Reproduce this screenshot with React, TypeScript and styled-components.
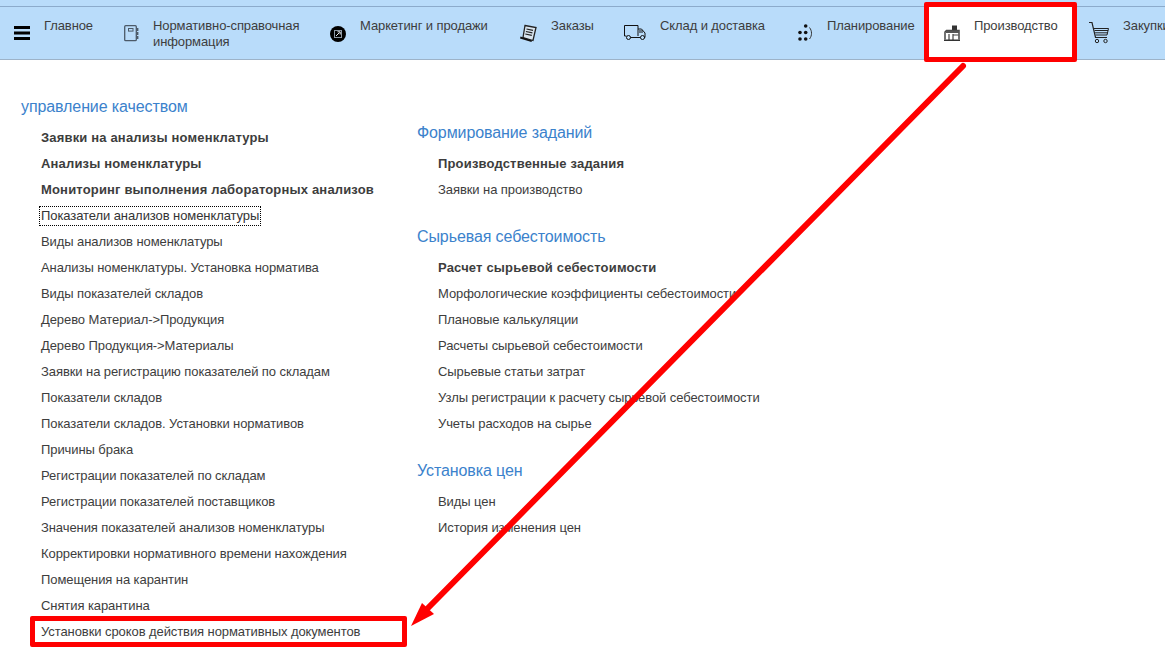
import React from 'react';
import styled, { createGlobalStyle } from 'styled-components';

const Global = createGlobalStyle`
  html, body { margin: 0; padding: 0; background: #fff; }
  body { font-family: "Liberation Sans", Arial, sans-serif; overflow: hidden; }
`;

const Page = styled.div`
  position: relative;
  width: 1165px;
  height: 654px;
  overflow: hidden;
  background: #fff;
`;

const TopStrip = styled.div`
  height: 6px;
  background: #b9dcfa;
  border-bottom: 1px solid #8cabcb;
`;

const NavBar = styled.nav`
  display: flex;
  height: 52px;
  background: #b9dcfa;
  border-bottom: 1px solid #9db3c8;
  overflow: hidden;
`;

const NavItem = styled.a<{ $active?: boolean; $first?: boolean; $width: number }>`
  display: flex;
  flex: none;
  box-sizing: border-box;
  width: ${p => p.$width}px;
  gap: 14px;
  padding: 11px 0 0 ${p => (p.$first ? 14 : 16)}px;
  background: ${p => (p.$active ? '#fff' : 'transparent')};
  font-size: 13px;
  line-height: 16px;
  letter-spacing: -0.1px;
  color: #3d3d3d;
`;

const NavIcon = styled.svg`
  flex: none;
  height: 24px;
  margin-top: 3px;
`;

const NavLabel = styled.span`
  white-space: pre;
`;

const Columns = styled.main`
  display: flex;
  padding-top: 34px;
`;

const Column = styled.div<{ $width: number; $top: number; $left: number }>`
  display: flex;
  flex-direction: column;
  gap: 21px;
  width: ${p => p.$width}px;
  padding: ${p => p.$top}px 0 0 ${p => p.$left}px;
`;

const Group = styled.section`
  display: flex;
  flex-direction: column;
`;

const Heading = styled.h2`
  margin: 0 0 5px;
  font-size: 16px;
  line-height: 26px;
  font-weight: 400;
  letter-spacing: -0.1px;
  color: #3b82cc;
`;

const Links = styled.ul<{ $indent: number }>`
  display: flex;
  flex-direction: column;
  margin: 0;
  padding: 0 0 0 ${p => p.$indent}px;
  list-style: none;
`;

const Link = styled.li<{ $strong?: boolean }>`
  height: 26px;
  font-size: 13px;
  line-height: 26px;
  letter-spacing: ${p => (p.$strong ? '0.17px' : '-0.08px')};
  font-weight: ${p => (p.$strong ? 700 : 400)};
  color: #3d3d3d;
  white-space: nowrap;
`;

const Focused = styled.span`
  display: inline-block;
  line-height: 16px;
  margin-left: -2px;
  padding: 2px;
  outline: 1px dotted #000;
  outline-offset: -1px;
  color: #333;
`;

const Frame = styled.div<{ $x: number; $y: number; $w: number; $h: number }>`
  position: absolute;
  left: ${p => p.$x}px;
  top: ${p => p.$y}px;
  width: ${p => p.$w}px;
  height: ${p => p.$h}px;
  box-sizing: border-box;
  border: 5px solid #ff0000;
  border-radius: 2px;
`;

const ArrowLayer = styled.svg`
  position: absolute;
  left: 0;
  top: 0;
`;

const Burger = () => (
  <NavIcon width="16" viewBox="0 0 16 24">
    <path d="M0 5h16v3H0zM0 10.5h16v3H0zM0 16h16v3H0z" fill="#000" />
  </NavIcon>
);

const Notebook = () => (
  <NavIcon width="15" viewBox="0 0 15 24" fill="none" stroke="#4c5a68" strokeWidth="1.3">
    <rect x=".7" y="4.7" width="11.6" height="15" rx="1" />
    <rect x="4.5" y="7.5" width="4.5" height="2.6" strokeWidth="1" />
    <path d="M13.5 7v3M13.5 11v3M13.5 15v3" strokeWidth="1.8" />
  </NavIcon>
);

const Marketing = () => (
  <NavIcon width="16" viewBox="0 0 16 24">
    <circle cx="8" cy="13" r="8" fill="#000" />
    <rect x="4.500" y="9.500" width="7" height="7" fill="none" stroke="#8d99a5" strokeWidth="1" />
    <path d="M6 15l3.500-3.500M7.500 10.800h2.700v2.700" fill="none" stroke="#e4e8ec" strokeWidth="1" />
  </NavIcon>
);

const Orders = () => (
  <NavIcon width="17" viewBox="0 0 17 24">
    <path d="M5 4.500 16 6.500l-3 13-10-3z" fill="#d8e4ee" stroke="#222" strokeWidth="1.300" />
    <path d="M6.500 8l6.500 1.400M5.900 10.500l6.500 1.400M5.300 13l6.500 1.400" stroke="#222" strokeWidth="1.100" />
    <path d="M.5 15.500 12 19.500l-.5 1.500L0 17.500z" fill="#111" />
  </NavIcon>
);

const Truck = () => (
  <NavIcon width="22" viewBox="0 0 22 24" fill="none" stroke="#111" strokeWidth="1">
    <path d="M2.500 15H.5V4.500H14V15" />
    <path d="M14 8h3.500l3.500 4v4.500h-1" />
    <path d="M16 9v3M18 9v3" />
    <circle cx="4.500" cy="16.500" r="2" />
    <circle cx="18.500" cy="16.500" r="2" />
    <path d="M6.500 16.500h10" />
  </NavIcon>
);

const Planning = () => (
  <NavIcon width="16" viewBox="0 0 16 24">
    <g fill="#111">
      <circle cx="8.700" cy="5" r="1.800" />
      <circle cx="3" cy="11.500" r="1.800" />
      <circle cx="8.700" cy="11.500" r="1.800" />
      <circle cx="3" cy="18" r="1.800" />
      <circle cx="8.700" cy="18" r="1.800" />
    </g>
    <path d="M12.500 6.500c2.700 3.500 2.700 8 0 11.500" fill="none" stroke="#333" strokeWidth="1" />
  </NavIcon>
);

const Factory = () => (
  <NavIcon width="16" viewBox="0 0 16 24">
    <path d="M8 4.500h5v5H8z" fill="#333" />
    <path d="M1 18.500V11l1.500-1.500H15v9" fill="none" stroke="#444" strokeWidth="1.500" />
    <path d="M2 9.500h13V12H2z" fill="#555" />
    <path d="M5 13v6M9 13v6M9 14h5.500" stroke="#444" strokeWidth="1.200" fill="none" />
    <path d="M0 18.500h16V20H0z" fill="#333" />
  </NavIcon>
);

const Cart = () => (
  <NavIcon width="20" viewBox="0 0 20 24" fill="none" stroke="#222" strokeWidth="1">
    <path d="M0 1.500h3l3.500 15H18" strokeWidth="1.200" />
    <path d="M5 7.500h14.500l-1.500 6.500H6.500M5.600 9.500h13.500M6.100 11.800h12.500" />
    <circle cx="8" cy="20" r="1.700" />
    <circle cx="16.500" cy="20" r="1.700" />
  </NavIcon>
);

const navItems = [
  { label: 'Главное', Icon: Burger, first: true, width: 108 },
  { label: 'Нормативно-справочная\nинформация', Icon: Notebook, width: 206 },
  { label: 'Маркетинг и продажи', Icon: Marketing, width: 190 },
  { label: 'Заказы', Icon: Orders, width: 104 },
  { label: 'Склад и доставка', Icon: Truck, width: 173 },
  { label: 'Планирование', Icon: Planning, width: 147 },
  { label: 'Производство', Icon: Factory, active: true, width: 145 },
  { label: 'Закупки', Icon: Cart, width: 145 },
];

type Entry = { text: string; strong?: boolean; focused?: boolean };
const e = (text: string): Entry => ({ text });
const s = (text: string): Entry => ({ text, strong: true });

const quality: Entry[] = [
  s('Заявки на анализы номенклатуры'),
  s('Анализы номенклатуры'),
  s('Мониторинг выполнения лабораторных анализов'),
  { text: 'Показатели анализов номенклатуры', focused: true },
  e('Виды анализов номенклатуры'),
  e('Анализы номенклатуры. Установка норматива'),
  e('Виды показателей складов'),
  e('Дерево Материал->Продукция'),
  e('Дерево Продукция->Материалы'),
  e('Заявки на регистрацию показателей по складам'),
  e('Показатели складов'),
  e('Показатели складов. Установки нормативов'),
  e('Причины брака'),
  e('Регистрации показателей по складам'),
  e('Регистрации показателей поставщиков'),
  e('Значения показателей анализов номенклатуры'),
  e('Корректировки нормативного времени нахождения'),
  e('Помещения на карантин'),
  e('Снятия карантина'),
  e('Установки сроков действия нормативных документов'),
];

const rightGroups: { title: string; items: Entry[] }[] = [
  { title: 'Формирование заданий', items: [s('Производственные задания'), e('Заявки на производство')] },
  {
    title: 'Сырьевая себестоимость',
    items: [
      s('Расчет сырьевой себестоимости'),
      e('Морфологические коэффициенты себестоимости'),
      e('Плановые калькуляции'),
      e('Расчеты сырьевой себестоимости'),
      e('Сырьевые статьи затрат'),
      e('Узлы регистрации к расчету сырьевой себестоимости'),
      e('Учеты расходов на сырье'),
    ],
  },
  { title: 'Установка цен', items: [e('Виды цен'), e('История изменения цен')] },
];

const Entries = ({ items, indent }: { items: Entry[]; indent: number }) => (
  <Links $indent={indent}>
    {items.map(item => (
      <Link key={item.text} $strong={item.strong}>
        {item.focused ? <Focused>{item.text}</Focused> : item.text}
      </Link>
    ))}
  </Links>
);

export default function App() {
  return (
    <Page>
      <Global />
      <TopStrip />
      <NavBar>
        {navItems.map(({ label, Icon, first, active, width }) => (
          <NavItem key={label} $first={first} $active={active} $width={width}>
            <Icon />
            <NavLabel>{label}</NavLabel>
          </NavItem>
        ))}
      </NavBar>
      <Columns>
        <Column $width={396} $top={0} $left={21}>
          <Group>
            <Heading>управление качеством</Heading>
            <Entries items={quality} indent={20} />
          </Group>
        </Column>
        <Column $width={700} $top={26} $left={0}>
          {rightGroups.map(group => (
            <Group key={group.title}>
              <Heading>{group.title}</Heading>
              <Entries items={group.items} indent={21} />
            </Group>
          ))}
        </Column>
      </Columns>
      <Frame $x={924} $y={2} $w={153} $h={60} />
      <Frame $x={30} $y={616} $w={377} $h={31} />
      <ArrowLayer width="1165" height="654" viewBox="0 0 1165 654">
        <path d="M963 66 428 608" stroke="#ff0000" strokeWidth="6" strokeLinecap="round" fill="none" />
        <path d="M411 626 422 603 434 614z" fill="#ff0000" />
      </ArrowLayer>
    </Page>
  );
}
